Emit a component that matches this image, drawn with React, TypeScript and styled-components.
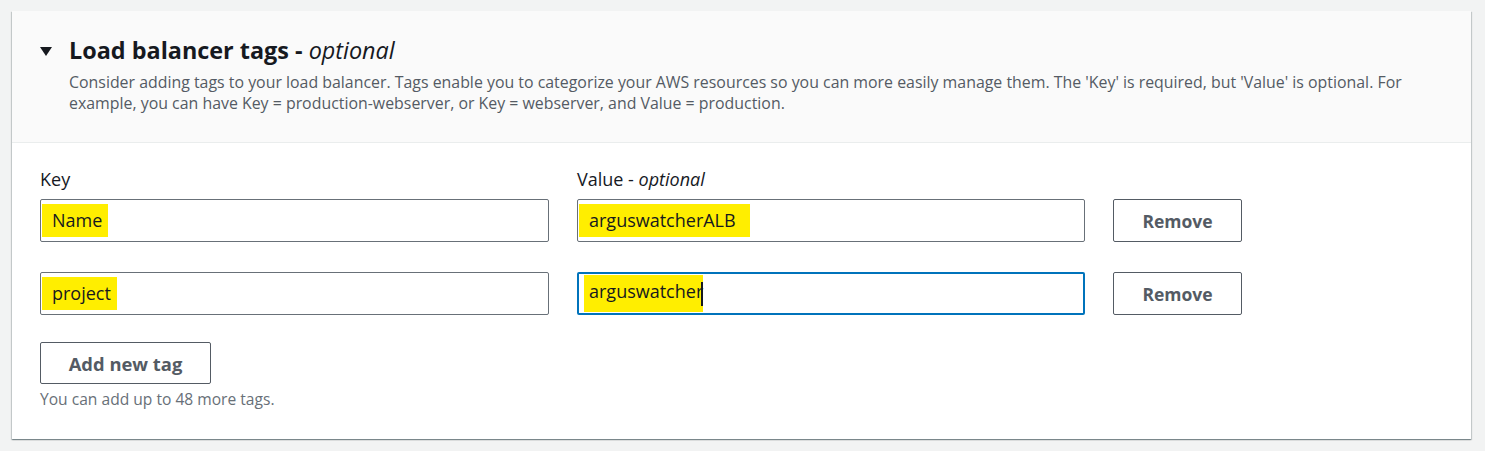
import React from "react";
import styled, { createGlobalStyle } from "styled-components";

const Global = createGlobalStyle`
  html, body { margin: 0; padding: 0; background: #f2f3f3; }
  body { font-family: "Open Sans", "Noto Sans", Arial, sans-serif; color: #16191f; }
`;

const Page = styled.div`
  padding: 11px 14px 12px 12px;
  box-sizing: border-box;
  width: 1485px;
`;

const Card = styled.section`
  background: #ffffff;
  box-shadow: 0 1px 1px 0 rgba(0, 28, 36, 0.3), 1px 1px 1px 0 rgba(0, 28, 36, 0.15),
    -1px 1px 1px 0 rgba(0, 28, 36, 0.15);
`;

const Header = styled.header`
  background: #fafafa;
  border-bottom: 1px solid #eaeded;
  padding: 25px 28px 0 28px;
  height: 132px;
  box-sizing: border-box;
  display: flex;
  gap: 17px;
`;

const Caret = styled.span`
  width: 0;
  height: 0;
  margin-top: 11px;
  border-left: 6px solid transparent;
  border-right: 6px solid transparent;
  border-top: 9px solid #16191f;
  flex: none;
`;

const HeaderText = styled.div`
  display: flex;
  flex-direction: column;
`;

const Title = styled.h2`
  margin: 0;
  font-size: 23.4px;
  line-height: 28px;
  font-weight: 700;
  color: #16191f;
`;

const Optional = styled.em`
  font-weight: 400;
  font-style: italic;
`;

const Description = styled.p`
  margin: 8px 0 0 0;
  font-size: 15.9px;
  line-height: 21px;
  color: #545b64;
  max-width: 1340px;
`;

const Body = styled.div`
  padding: 25px 28px 30px 28px;
`;

const Grid = styled.div`
  display: grid;
  grid-template-columns: 509px 508px 129px;
  column-gap: 28px;
  row-gap: 30px;
  align-items: end;
`;

const Field = styled.div`
  display: flex;
  flex-direction: column;
  gap: 9px;
`;

const Label = styled.label`
  font-size: 18px;
  line-height: 22px;
  color: #16191f;
`;

const Input = styled.div<{ $focused?: boolean }>`
  height: 43px;
  box-sizing: border-box;
  border: ${(p) => (p.$focused ? "2px solid #0073bb" : "1px solid #687078")};
  border-radius: 2px;
  background: #fff;
  display: flex;
  align-items: center;
  padding: ${(p) => (p.$focused ? "0 0 0 5px" : "0 0 0 1px")};
  font-size: 18px;
  color: #16191f;
`;

const Highlight = styled.span<{ $right?: number; $left?: number }>`
  background: #ffee00;
  padding: 5px ${(p) => p.$right ?? 6}px 6px ${(p) => p.$left ?? 10}px;
  line-height: 22px;
`;

const Caretline = styled.span`
  display: inline-block;
  width: 2px;
  height: 24px;
  background: #16191f;
  vertical-align: middle;
  margin-left: -2px;
`;

const Button = styled.button<{ $width?: number }>`
  width: ${(p) => p.$width ?? 129}px;
  height: 43px;
  box-sizing: border-box;
  border: 1px solid #545b64;
  border-radius: 2px;
  background: #fff;
  color: #545b64;
  font-family: inherit;
  font-size: 17.5px;
  font-weight: 700;
  cursor: pointer;
  padding: 0;
`;

const Footer = styled.div`
  margin-top: 27px;
  display: flex;
  flex-direction: column;
  gap: 5px;
`;

const AddButton = styled(Button)`
  height: 42px;
  font-size: 18.4px;
`;

const Hint = styled.div`
  font-size: 15.6px;
  line-height: 20px;
  color: #687078;
`;

export default function App() {
  return (
    <>
      <Global />
      <Page>
        <Card>
          <Header>
            <Caret />
            <HeaderText>
              <Title>
                Load balancer tags - <Optional>optional</Optional>
              </Title>
              <Description>
                Consider adding tags to your load balancer. Tags enable you to categorize your AWS
                resources so you can more easily manage them. The 'Key' is required, but 'Value' is
                optional. For example, you can have Key = production-webserver, or Key = webserver,
                and Value = production.
              </Description>
            </HeaderText>
          </Header>
          <Body>
            <Grid>
              <Field>
                <Label>Key</Label>
                <Input>
                  <Highlight>Name</Highlight>
                </Input>
              </Field>
              <Field>
                <Label>
                  Value - <Optional>optional</Optional>
                </Label>
                <Input>
                  <Highlight $right={14}>arguswatcherALB</Highlight>
                </Input>
              </Field>
              <Button>Remove</Button>

              <Input>
                <Highlight>project</Highlight>
              </Input>
              <Input $focused>
                <Highlight $right={0} $left={5}>
                  arguswatcher
                  <Caretline />
                </Highlight>
              </Input>
              <Button>Remove</Button>
            </Grid>
            <Footer>
              <AddButton $width={171}>Add new tag</AddButton>
              <Hint>You can add up to 48 more tags.</Hint>
            </Footer>
          </Body>
        </Card>
      </Page>
    </>
  );
}
